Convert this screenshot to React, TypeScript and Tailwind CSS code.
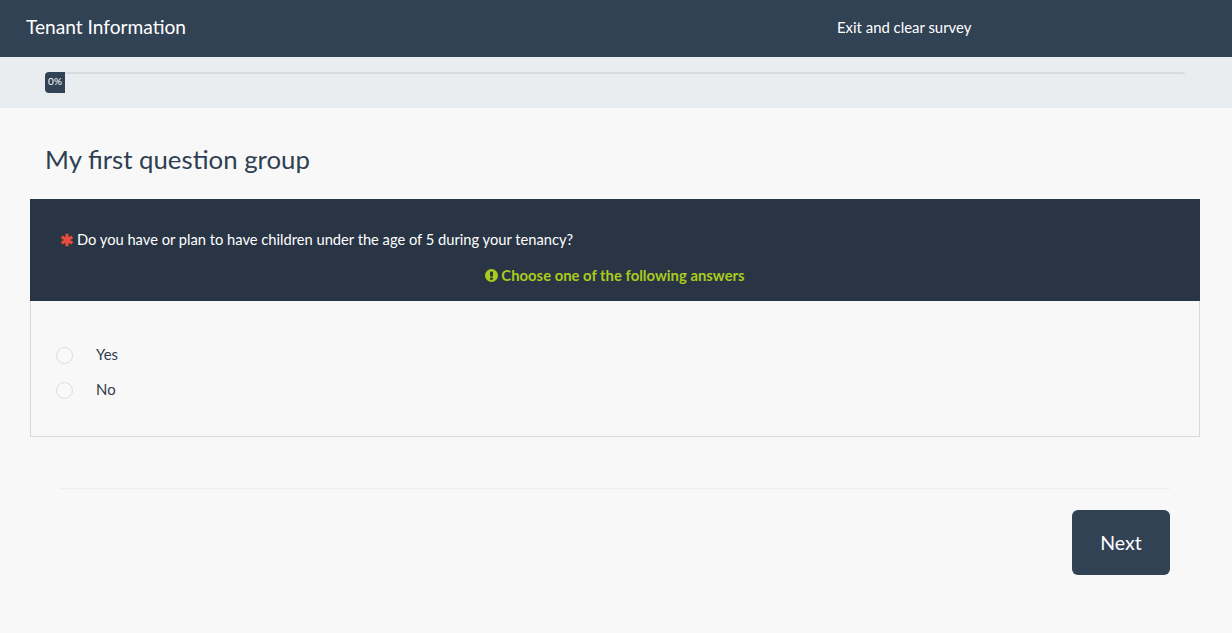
import React from 'react'

function RadioRow({ label }: { label: string }) {
	return (
		<label className="flex items-center h-[35px]">
			<span className="block w-[17px] h-[17px] rounded-full border border-[#dcdcdc] bg-[#f9f9f9] mt-[1px]" />
			<span className="ml-[23px] text-[14.9px] text-[#2f3b4a]">{label}</span>
		</label>
	)
}

export default function App() {
	return (
		<div className="min-h-[633px] bg-[#f8f8f8] font-['Lato',sans-serif] text-[14.7px] overflow-hidden [text-rendering:optimizeLegibility]">
			<header className="flex items-center h-[57px] pb-[2px] bg-[#324255] text-white">
				<div className="w-[810px] pl-[26px] text-[19.15px]">Tenant Information</div>
				<a className="ml-[27px] text-[14.9px]">Exit and clear survey</a>
			</header>

			<div className="h-[51px] bg-[#e9edef] pt-[15px] px-[45px]">
				<div className="h-[21px] w-[1141px] rounded-t-[5px] border-t-2 border-[#d9dcde]">
					<div className="flex items-center justify-center w-[20px] h-[21px] -mt-[2px] rounded-l-[4px] bg-[#324255] text-white text-[10px] pb-[2px]">
						0%
					</div>
				</div>
			</div>

			<h1 className="pl-[45px] pt-[34px] h-[91px] text-[25.8px] leading-[34px] text-[#2f3f52]">
				My first question group
			</h1>

			<section className="ml-[30px] mr-[32px]">
				<div className="h-[102px] bg-[#293545] text-white pl-[30px]">
					<div className="flex items-center pt-[29px] h-[51px]">
						<svg viewBox="0 0 14 14" className="w-[14px] h-[14px] mr-[3px] mt-[1px] text-[#e74c3c]" fill="none" stroke="currentColor" strokeWidth="3.2">
							<path d="M7 .8v12.4M1.6 3.9l10.8 6.2M1.6 10.1l10.8-6.2" />
						</svg>
						<span>Do you have or plan to have children under the age of 5 during your tenancy?</span>
					</div>
					<div className="flex items-center justify-center mt-[14px] pr-[30px] font-bold text-[14.85px] text-[#aacb1c]">
						<svg viewBox="0 0 14 14" className="w-[13px] h-[13px] mr-[3px]">
							<circle cx="7" cy="7" r="7" fill="currentColor" />
							<rect x="5.4" y="2.6" width="3.2" height="5.6" rx="0.5" fill="#293545" />
							<rect x="5.4" y="9.1" width="3.2" height="2.5" rx="0.5" fill="#293545" />
						</svg>
						<span>Choose one of the following answers</span>
					</div>
				</div>
				<div className="h-[136px] border border-t-0 border-[#d9d9d9] pt-[36px] pl-[25px]">
					<RadioRow label="Yes" />
					<RadioRow label="No" />
				</div>
			</section>

			<div className="ml-[60px] mr-[62px] mt-[51px] border-t border-[#eeeeee]" />

			<div className="flex justify-end mr-[62px] mt-[21px]">
				<button className="w-[98px] h-[65px] rounded-[6px] bg-[#324255] text-white text-[19.5px]">Next</button>
			</div>
		</div>
	)
}
